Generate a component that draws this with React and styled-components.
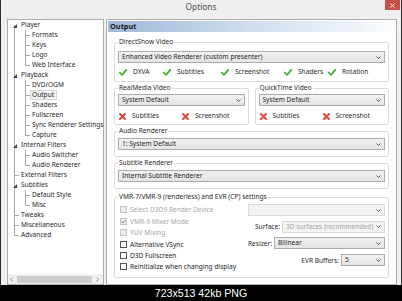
import React from 'react';
import styled, { createGlobalStyle } from 'styled-components';

const Global = createGlobalStyle`
  html, body { margin: 0; padding: 0; background: #000; }
  body { width: 402px; height: 301px; overflow: hidden; font-family: "Noto Sans", "Open Sans", sans-serif; }
  * { box-sizing: border-box; }
`;

const Frame = styled.div`
  width: 402px; height: 301px; display: flex; flex-direction: column; background: #000;
`;

const Window = styled.div`
  height: 285px; background: #efefef;
  border-left: 1px solid #2e2e2e; border-right: 1px solid #2e2e2e;
  display: flex; flex-direction: column;
`;

const TitleBar = styled.div`
  height: 19px; display: flex; align-items: flex-start;
`;
const TitleSide = styled.div`
  flex: 1; display: flex; justify-content: ${p => (p.$end ? 'flex-end' : 'flex-start')};
`;
const TitleText = styled.div`
  font-size: 8.3px; line-height: 14px; color: #4a4a4a;
`;
const CloseBtn = styled.div`
  width: 15px; height: 10px; margin-right: 1px; background: #c8504b;
  display: flex; align-items: center; justify-content: center;
`;

const Body = styled.div`
  flex: 1; display: flex; gap: 2px; padding: 0 4px 0 6px; min-height: 0;
`;

const TreePanel = styled.div`
  width: 97px; background: #fff; border: 1px solid #acacac;
  display: flex; flex-direction: column;
`;
const TreeList = styled.div`
  flex: 1; display: flex; flex-direction: column;
`;
const TreeRow = styled.div`
  height: 10px; display: flex; align-items: center; white-space: nowrap;
`;

const lineCss = ({ $v, $h }) => {
  const g = 'linear-gradient(#a9a9a9,#a9a9a9)';
  const imgs = [], sizes = [], pos = [];
  if ($v === 'full') { imgs.push(g); sizes.push('1px 100%'); pos.push('6px 0'); }
  if ($v === 'top') { imgs.push(g); sizes.push('1px 5px'); pos.push('6px 0'); }
  if ($v === 'bottom') { imgs.push(g); sizes.push('1px 5px'); pos.push('6px 5px'); }
  if ($h) { imgs.push(g); sizes.push('5px 1px'); pos.push('6px 5px'); }
  if (!imgs.length) return '';
  return `background-image:${imgs.join(',')};background-size:${sizes.join(',')};background-position:${pos.join(',')};background-repeat:no-repeat;`;
};

const Cell = styled.span`
  flex: none; width: 11px; height: 10px; display: flex; align-items: center; justify-content: flex-start;
  padding-left: 6px;
  ${lineCss}
`;

const TreeLabel = styled.span`
  margin-left: 0; padding: 0 2px 0 1px; font-size: 6.6px; line-height: 8px; color: #1f1f1f;
  border: 1px solid ${p => (p.$selected ? '#d4d4d4' : 'transparent')};
  background: ${p => (p.$selected ? '#f3f3f3' : 'transparent')};
`;

const HScroll = styled.div`
  height: 10px; display: flex; align-items: center; background: #f0f0f0; padding: 0 4px 0 2px;
`;
const Thumb = styled.div`
  width: 75px; height: 7px; background: #cdcdcd; margin-left: 4px;
`;
const Spacer = styled.div` flex: 1; `;

const Panel = styled.div`
  flex: 1; background: #fff; border: 1px solid #acacac; padding: 1px;
  display: flex; flex-direction: column;
`;
const Header = styled.div`
  height: 11px; background: linear-gradient(to right, #9fb9d8, #d9e4f1 60%, #fbfcfe);
  font-weight: 700; font-size: 7.4px; line-height: 11px; color: #1c1c1c; padding-left: 2px;
`;
const Content = styled.div`
  display: flex; flex-direction: column; padding: 0 6px;
`;

const Group = styled.fieldset`
  margin: ${p => p.$mt || 0}px 0 0 0; padding: 0 3px; border: 1px solid #dcdcdc; border-radius: 2px;
  min-width: 0; height: ${p => p.$h}px; display: flex; flex-direction: column;
  flex: ${p => (p.$grow ? 1 : 'none')};
`;
const Legend = styled.legend`
  padding: 0 1px; margin: 0; font-size: 6.6px; line-height: 8px; color: #2a2a2a;
`;

const GroupRow = styled.div`
  display: flex; gap: 6px; margin-top: 2px;
`;

const Select = styled.div`
  height: 12px; flex: none; margin-top: ${p => p.$mt || 0}px;
  width: ${p => (p.$w ? `${p.$w}px` : 'auto')};
  border: 1px solid ${p => (p.$disabled ? '#d9d9d9' : '#acacac')};
  background: ${p => (p.$disabled ? '#f3f3f3' : 'linear-gradient(#f2f2f2,#e4e4e4)')};
  color: ${p => (p.$disabled ? '#a2a2a2' : '#1e1e1e')};
  display: flex; align-items: center; justify-content: space-between; padding: 0 3px;
  font-size: 6.6px; line-height: 10px; white-space: nowrap; overflow: hidden;
`;

const StatusRow = styled.div`
  display: flex; height: 8px; align-items: center; padding-left: 1px; margin-top: ${p => p.$mt}px;
`;
const StatusItem = styled.div`
  display: flex; align-items: center; gap: 6px; width: ${p => (p.$w ? `${p.$w}px` : 'auto')};
  flex: none; font-size: 6.6px; line-height: 8px; color: #2a2a2a; white-space: nowrap;
`;

const VmrBody = styled.div`
  display: flex; padding: 0 0 0 2px; flex: 1;
`;
const CheckCol = styled.div`
  flex: 1; display: flex; flex-direction: column; padding-top: 3.3px;
`;
const CheckRow = styled.div`
  height: 11.4px; display: flex; align-items: center; gap: 3px; font-size: 6.6px; white-space: nowrap;
  color: ${p => (p.$disabled ? '#a6a6a6' : '#1e1e1e')};
`;
const Box = styled.span`
  width: 7px; height: 7px; flex: none; display: flex; align-items: center; justify-content: center;
  border: 1px solid ${p => (p.$disabled ? '#c4c4c4' : '#555')};
  background: ${p => (p.$disabled ? '#ececec' : '#fff')};
`;
const RightCol = styled.div`
  width: 139px; display: flex; flex-direction: column; align-items: flex-end; gap: 4.7px;
  padding-top: 3px; padding-right: 0;
`;
const FieldRow = styled.div`
  display: flex; align-items: center; gap: 2px; font-size: 6.6px; color: #2a2a2a; white-space: nowrap;
`;

const Caption = styled.div`
  flex: 1; display: flex; align-items: center; justify-content: center;
  font-family: "Liberation Sans", Arial, sans-serif; font-size: 10.6px; color: #fff;
`;

const Chevron = () => (
  <svg width="5" height="3" viewBox="0 0 5 3"><polyline points="0.5,0.5 2.5,2.5 4.5,0.5" fill="none" stroke="#555" strokeWidth="1" /></svg>
);
const Tick = () => (
  <svg width="8" height="7" viewBox="0 0 8 7"><path d="M0.8 3.6 L3 5.8 L7.2 1" fill="none" stroke="#55ad3c" strokeWidth="1.9" strokeLinecap="round" strokeLinejoin="round" /></svg>
);
const Cross = () => (
  <svg width="7" height="7" viewBox="0 0 7 7"><path d="M1 1 L6 6 M6 1 L1 6" fill="none" stroke="#e2413a" strokeWidth="1.9" strokeLinecap="round" /></svg>
);
const Expander = () => (
  <svg width="4" height="4" viewBox="0 0 4 4" style={{ marginLeft: -1, marginTop: 1 }}><polygon points="4,0 4,4 0,4" fill="#404040" /></svg>
);
const Arrow = ({ dir }) => (
  <svg width="3" height="5" viewBox="0 0 3 5">
    <polyline points={dir === 'l' ? '2.5,0.5 0.5,2.5 2.5,4.5' : '0.5,0.5 2.5,2.5 0.5,4.5'} fill="none" stroke="#8a8a8a" strokeWidth="1" />
  </svg>
);
const SmallTick = () => (
  <svg width="5" height="5" viewBox="0 0 5 5"><path d="M0.5 2.6 L2 4 L4.5 1" fill="none" stroke="#8e8e8e" strokeWidth="1" /></svg>
);

const tree = [
  { label: 'Player', level: 0, exp: true, first: true },
  { label: 'Formats', level: 1 },
  { label: 'Keys', level: 1 },
  { label: 'Logo', level: 1 },
  { label: 'Web Interface', level: 1, last: true },
  { label: 'Playback', level: 0, exp: true },
  { label: 'DVD/OGM', level: 1 },
  { label: 'Output', level: 1, selected: true },
  { label: 'Shaders', level: 1 },
  { label: 'Fullscreen', level: 1 },
  { label: 'Sync Renderer Settings', level: 1 },
  { label: 'Capture', level: 1, last: true },
  { label: 'Internal Filters', level: 0, exp: true },
  { label: 'Audio Switcher', level: 1 },
  { label: 'Audio Renderer', level: 1, last: true },
  { label: 'External Filters', level: 0 },
  { label: 'Subtitles', level: 0, exp: true },
  { label: 'Default Style', level: 1 },
  { label: 'Misc', level: 1, last: true },
  { label: 'Tweaks', level: 0 },
  { label: 'Miscellaneous', level: 0 },
  { label: 'Advanced', level: 0, last: true },
];

const TreeItem = ({ item }) => {
  if (item.level === 0) {
    const v = item.first ? 'bottom' : item.last ? 'top' : 'full';
    return (
      <TreeRow>
        <Cell $v={v} $h={!item.exp}>{item.exp && <Expander />}</Cell>
        <TreeLabel>{item.label}</TreeLabel>
      </TreeRow>
    );
  }
  return (
    <TreeRow>
      <Cell $v="full" />
      <Cell $v={item.last ? 'top' : 'full'} $h />
      <TreeLabel $selected={item.selected}>{item.label}</TreeLabel>
    </TreeRow>
  );
};

export default function App() {
  return (
    <>
      <Global />
      <Frame>
        <Window>
          <TitleBar>
            <TitleSide />
            <TitleText>Options</TitleText>
            <TitleSide $end>
              <CloseBtn>
                <svg width="5" height="5" viewBox="0 0 5 5"><path d="M0.5 0.5 L4.5 4.5 M4.5 0.5 L0.5 4.5" stroke="#fff" strokeWidth="1" /></svg>
              </CloseBtn>
            </TitleSide>
          </TitleBar>
          <Body>
            <TreePanel>
              <TreeList>
                {tree.map(item => <TreeItem key={item.label} item={item} />)}
              </TreeList>
              <HScroll>
                <Arrow dir="l" />
                <Thumb />
                <Spacer />
                <Arrow dir="r" />
              </HScroll>
            </TreePanel>
            <Panel>
              <Header>Output</Header>
              <Content>
                <Group $mt={6} $h={44}>
                  <Legend>DirectShow Video</Legend>
                  <Select $mt={5}>Enhanced Video Renderer (custom presenter)<Chevron /></Select>
                  <StatusRow $mt={5}>
                    <StatusItem $w={44}><Tick />DXVA</StatusItem>
                    <StatusItem $w={58}><Tick />Subtitles</StatusItem>
                    <StatusItem $w={63}><Tick />Screenshot</StatusItem>
                    <StatusItem $w={44}><Tick />Shaders</StatusItem>
                    <StatusItem><Tick />Rotation</StatusItem>
                  </StatusRow>
                </Group>
                <GroupRow>
                  <Group $h={41} $grow>
                    <Legend>RealMedia Video</Legend>
                    <Select $mt={2}>System Default<Chevron /></Select>
                    <StatusRow $mt={6}>
                      <StatusItem $w={63}><Cross />Subtitles</StatusItem>
                      <StatusItem><Cross />Screenshot</StatusItem>
                    </StatusRow>
                  </Group>
                  <Group $h={41} $grow>
                    <Legend>QuickTime Video</Legend>
                    <Select $mt={2}>System Default<Chevron /></Select>
                    <StatusRow $mt={6}>
                      <StatusItem $w={63}><Cross />Subtitles</StatusItem>
                      <StatusItem><Cross />Screenshot</StatusItem>
                    </StatusRow>
                  </Group>
                </GroupRow>
                <Group $mt={2} $h={30}>
                  <Legend>Audio Renderer</Legend>
                  <Select $mt={3}>1: System Default<Chevron /></Select>
                </Group>
                <Group $mt={2} $h={30}>
                  <Legend>Subtitle Renderer</Legend>
                  <Select $mt={3}>Internal Subtitle Renderer<Chevron /></Select>
                </Group>
                <Group $mt={4} $h={85}>
                  <Legend>VMR-7/VMR-9 (renderless) and EVR (CP) settings</Legend>
                  <VmrBody>
                    <CheckCol>
                      <CheckRow $disabled><Box $disabled />Select D3D9 Render Device</CheckRow>
                      <CheckRow $disabled><Box $disabled><SmallTick /></Box>VMR-9 Mixer Mode</CheckRow>
                      <CheckRow $disabled><Box $disabled />YUV Mixing</CheckRow>
                      <CheckRow><Box />Alternative VSync</CheckRow>
                      <CheckRow><Box />D3D Fullscreen</CheckRow>
                      <CheckRow><Box />Reinitialize when changing display</CheckRow>
                    </CheckCol>
                    <RightCol>
                      <Select $w={137} $disabled><span /><Chevron /></Select>
                      <FieldRow>Surface:<Select $w={103} $disabled>3D surfaces (recommended)<Chevron /></Select></FieldRow>
                      <FieldRow>Resizer:<Select $w={111}>Bilinear<Chevron /></Select></FieldRow>
                      <FieldRow>EVR Buffers:<Select $w={44}>5<Chevron /></Select></FieldRow>
                    </RightCol>
                  </VmrBody>
                </Group>
              </Content>
            </Panel>
          </Body>
        </Window>
        <Caption>723x513 42kb PNG</Caption>
      </Frame>
    </>
  );
}
